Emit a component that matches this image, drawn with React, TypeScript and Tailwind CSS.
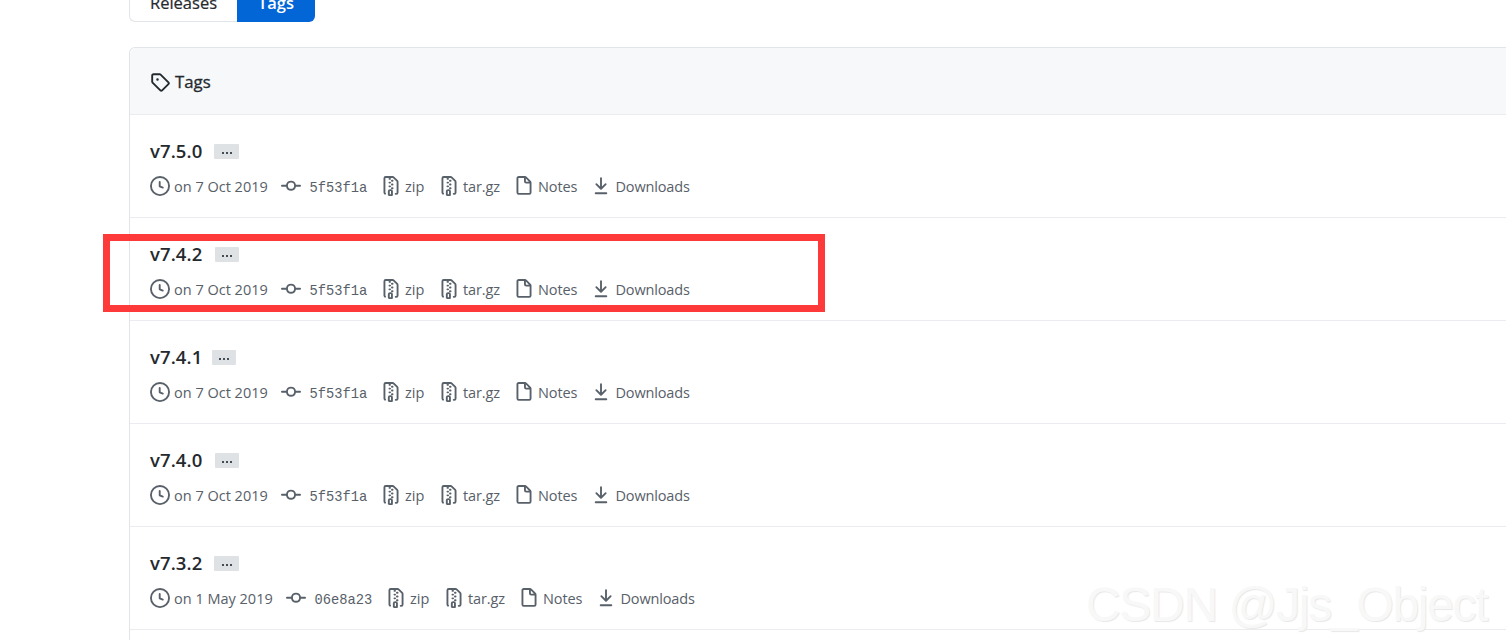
const icons = {
    tag: 'M2.5 7.775V2.75a.25.25 0 01.25-.25h5.025a.25.25 0 01.177.073l6.25 6.25a.25.25 0 010 .354l-5.025 5.025a.25.25 0 01-.354 0l-6.25-6.25a.25.25 0 01-.073-.177zm-1.5 0V2.75C1 1.784 1.784 1 2.75 1h5.025c.464 0 .91.184 1.238.513l6.25 6.25a1.75 1.75 0 010 2.474l-5.026 5.026a1.75 1.75 0 01-2.474 0l-6.25-6.25A1.75 1.75 0 011 7.775zM6 5a1 1 0 100 2 1 1 0 000-2z',
    clock: 'M1.5 8a6.5 6.5 0 1113 0 6.5 6.5 0 01-13 0zM8 0a8 8 0 100 16A8 8 0 008 0zm.5 4.75a.75.75 0 00-1.5 0v3.5a.75.75 0 00.471.696l2.5 1a.75.75 0 00.557-1.392L8.5 7.742V4.75z',
    commit: 'M10.5 7.75a2.5 2.5 0 11-5 0 2.5 2.5 0 015 0zm1.43.75a4.002 4.002 0 01-7.86 0H.75a.75.75 0 110-1.5h3.32a4.001 4.001 0 017.86 0h3.32a.75.75 0 110 1.5h-3.32z',
    zip: 'M3.5 1.75a.25.25 0 01.25-.25h3a.75.75 0 000 1.5h.5a.75.75 0 000-1.5h2.086a.25.25 0 01.177.073l2.914 2.914a.25.25 0 01.073.177v8.586a.25.25 0 01-.25.25h-.5a.75.75 0 000 1.5h.5A1.75 1.75 0 0014 13.25V4.664c0-.464-.184-.909-.513-1.237L10.573.513A1.75 1.75 0 009.336 0H3.75A1.75 1.75 0 002 1.75v11.5c0 .649.353 1.214.874 1.515a.75.75 0 10.752-1.298.25.25 0 01-.126-.217V1.75zM8.75 3a.75.75 0 000 1.5h.5a.75.75 0 000-1.5h-.5zM6 5.25a.75.75 0 01.75-.75h.5a.75.75 0 010 1.5h-.5A.75.75 0 016 5.25zm2 1.5A.75.75 0 018.75 6h.5a.75.75 0 010 1.5h-.5A.75.75 0 018 6.75zm-1.25.75a.75.75 0 000 1.5h.5a.75.75 0 000-1.5h-.5zM8 9.75A.75.75 0 018.75 9h.5a.75.75 0 010 1.5h-.5A.75.75 0 018 9.75zm-.75.75a1.75 1.75 0 00-1.75 1.75v3c0 .414.336.75.75.75h2.5a.75.75 0 00.75-.75v-3a1.75 1.75 0 00-1.75-1.75h-.5zM7 12.25a.25.25 0 01.25-.25h.5a.25.25 0 01.25.25v2.25H7v-2.25z',
    file: 'M3.75 1.5a.25.25 0 00-.25.25v11.5c0 .138.112.25.25.25h8.5a.25.25 0 00.25-.25V6H9.75A1.75 1.75 0 018 4.25V1.5H3.75zm5.75.56v2.19c0 .138.112.25.25.25h2.19L9.5 2.06zM2 1.75C2 .784 2.784 0 3.75 0h5.086c.464 0 .909.184 1.237.513l3.414 3.414c.329.328.513.773.513 1.237v8.086A1.75 1.75 0 0112.25 15h-8.5A1.75 1.75 0 012 13.25V1.75z',
    download: 'M7.47 10.78a.75.75 0 001.06 0l3.75-3.75a.75.75 0 00-1.06-1.06L8.75 8.44V1.75a.75.75 0 00-1.5 0v6.69L4.78 5.97a.75.75 0 00-1.06 1.06l3.75 3.75zM3.75 13a.75.75 0 000 1.5h8.5a.75.75 0 000-1.5h-8.5z',
};

const tags = [
    { name: 'v7.5.0', date: 'on 7 Oct 2019', commit: '5f53f1a', nameWidth: 'w-16', dateWidth: 'w-[131px]', badgeWidth: 'w-[25px]' },
    { name: 'v7.4.2', date: 'on 7 Oct 2019', commit: '5f53f1a', nameWidth: 'w-[65px]', dateWidth: 'w-[131px]', badgeWidth: 'w-6' },
    { name: 'v7.4.1', date: 'on 7 Oct 2019', commit: '5f53f1a', nameWidth: 'w-[62px]', dateWidth: 'w-[131px]', badgeWidth: 'w-6' },
    { name: 'v7.4.0', date: 'on 7 Oct 2019', commit: '5f53f1a', nameWidth: 'w-[65px]', dateWidth: 'w-[131px]', badgeWidth: 'w-6' },
    { name: 'v7.3.2', date: 'on 1 May 2019', commit: '06e8a23', nameWidth: 'w-16', dateWidth: 'w-[136px]', badgeWidth: 'w-[25px]' },
];

function Icon({ name }: { name: keyof typeof icons }) {
    return (
        <svg viewBox="0 0 16 16" className="size-5 shrink-0" fill="currentColor">
            <path fillRule="evenodd" d={icons[name]} />
        </svg>
    );
}

function TagRow({ tag }: { tag: (typeof tags)[number] }) {
    return (
        <li className="h-[103px] border-b border-[#eaecef] pl-5 pt-[22px]">
            <div className="flex h-7 items-center">
                <h4 className={`${tag.nameWidth} text-[18.5px] font-semibold tracking-[0.1px] text-[#24292e]`}>{tag.name}</h4>
                <button className={`${tag.badgeWidth} flex h-[15px] items-center justify-center gap-[2px] rounded-[1px] bg-[#dfe2e5] pt-[3px]`}>
                    <span className="size-[2px] bg-[#444d56]" />
                    <span className="size-[2px] bg-[#444d56]" />
                    <span className="size-[2px] bg-[#444d56]" />
                </button>
            </div>
            <ul className="mt-[11px] flex h-5 items-center whitespace-nowrap text-[14.5px] text-[#586069]">
                <li className={`${tag.dateWidth} flex items-center gap-1`}>
                    <Icon name="clock" />
                    <span className="pt-0.5">{tag.date}</span>
                </li>
                <li className="flex w-[100px] items-center gap-[8.5px]">
                    <Icon name="commit" />
                    <span className="pt-1.5 font-['Liberation_Mono',monospace] text-[13.75px]">{tag.commit}</span>
                </li>
                <li className="flex w-[58px] items-center gap-1">
                    <Icon name="zip" />
                    <span className="pt-0.5">zip</span>
                </li>
                <li className="flex w-[75px] items-center gap-1">
                    <Icon name="zip" />
                    <span className="pt-0.5 tracking-[-0.1px]">tar.gz</span>
                </li>
                <li className="flex w-[77px] items-center gap-1">
                    <Icon name="file" />
                    <span className="pt-0.5 tracking-[-0.1px]">Notes</span>
                </li>
                <li className="flex items-center gap-[4.5px]">
                    <Icon name="download" />
                    <span className="pt-0.5 tracking-[-0.15px]">Downloads</span>
                </li>
            </ul>
        </li>
    );
}

export default function App() {
    return (
        <div className="relative h-[640px] w-full overflow-hidden bg-white pl-[129px] font-['Open_Sans','Noto_Sans',sans-serif]">
            <nav className="flex h-[22px] items-end font-medium leading-6">
                <a className="flex h-10 w-[108px] items-center justify-center rounded-l-md border border-r-0 border-[#e1e4e8] pt-0.5 text-[16.5px] text-[#24292e] [-webkit-text-stroke:0.2px]">
                    Releases
                </a>
                <a className="flex h-10 w-[78px] items-center justify-center rounded-r-md bg-[#0366d6] pt-0.5 text-[16.5px] font-semibold text-white">
                    Tags
                </a>
            </nav>

            <div className="mt-[25px] w-[1400px] rounded-t-md border border-b-0 border-[#e1e4e8]">
                <div className="flex h-[67px] items-center gap-[5px] rounded-t-md border-b border-[#eaecef] bg-[#f6f8fa] pl-5 pt-0.5 text-[#24292e]">
                    <Icon name="tag" />
                    <h3 className="text-[16.75px] font-medium [-webkit-text-stroke:0.3px]">Tags</h3>
                </div>
                <ul>
                    {tags.map(tag => (
                        <TagRow key={tag.name} tag={tag} />
                    ))}
                </ul>
                <div className="h-5" />
            </div>

            <div className="absolute left-[103px] top-[234px] h-[78px] w-[722px] border-[7px] border-[#fd3939]" />
            <div className="absolute left-[1086px] top-[577px] whitespace-nowrap font-['Liberation_Sans',sans-serif] text-[48px] leading-[56px] tracking-[-1.3px] text-[#f8f8f8] [text-shadow:1px_1px_1px_#e8e8e8]">
                CSDN @Jjs_Object
            </div>
        </div>
    );
}
